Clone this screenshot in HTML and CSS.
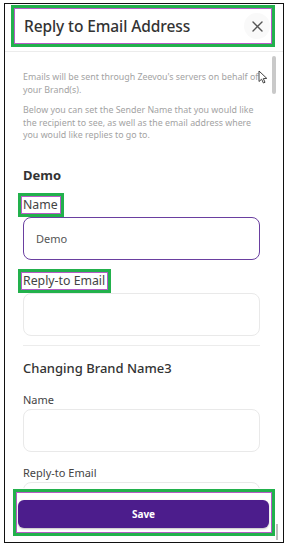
FILE: index.html
```html
<!DOCTYPE html>
<html lang="en">
<head>
    <meta charset="UTF-8">
    <meta name="viewport" content="width=device-width, initial-scale=1.0">
    <title>Reply to Email Address</title>
    <link rel="stylesheet" href="styles.css">
</head>
<body>
    <div class="frame">
        <div class="modal-header">
            <div class="mark title-box">
                <h2>Reply to Email Address</h2>
                <button type="button" class="close" aria-label="Close">
                    <svg width="11" height="11" viewBox="0 0 11 11"><path d="M1 1 L10 10 M10 1 L1 10" stroke="#555" stroke-width="1.4" stroke-linecap="round"/></svg>
                </button>
            </div>
        </div>

        <div class="modal-body">
            <p class="intro first">Emails will be sent through Zeevou's servers on behalf of your Brand(s).</p>
            <p class="intro">Below you can set the Sender Name that you would like the recipient to see, as well as the email address where you would like replies to go to.</p>

            <h3 class="brand first-brand">Demo</h3>
            <label class="mark field-label boxed">Name</label>
            <input type="text" class="field active" value="Demo">
            <label class="mark field-label boxed">Reply-to Email</label>
            <input type="text" class="field" value="">

            <hr class="divider">

            <h3 class="brand second-brand">Changing Brand Name3</h3>
            <label class="field-label">Name</label>
            <input type="text" class="field" value="">
            <label class="field-label">Reply-to Email</label>
            <input type="text" class="field" value="">

            <div class="scroll-thumb"></div>
            <svg class="cursor" width="10" height="14" viewBox="0 0 10 14"><path d="M1 1 L1 11.5 L3.6 9.2 L5.4 13 L7 12.3 L5.3 8.6 L8.8 8.4 Z" fill="#fff" stroke="#444" stroke-width="1" stroke-linejoin="round"/></svg>
        </div>

        <div class="modal-footer">
            <div class="mark save-box">
                <button type="button" class="save">Save</button>
            </div>
            <div class="scroll-thumb bottom"></div>
        </div>
    </div>
</body>
</html>
```

FILE: styles.css
```css
body {
    margin: 0;
    padding: 0;
    background: #fff;
    font-family: 'Noto Sans', 'Lato', sans-serif;
    color: #333;
}

.frame {
    position: relative;
    width: 278px;
    height: 538px;
    margin: 3px 0 0 4px;
    border: 1px solid #111;
    display: flex;
    flex-direction: column;
    overflow: hidden;
    background: #fff;
}

/* green/pink highlight boxes from the annotated screenshot */
.mark {
    border: 3px solid #22b14c;
    box-shadow: inset 0 0 0 1px #b65cc6;
}

.modal-header {
    height: 47px;
    border-bottom: 1px solid #ececec;
    flex-shrink: 0;
}

.title-box {
    box-sizing: border-box;
    width: 264px;
    height: 42px;
    margin: 1px 0 0 6px;
    padding: 0 2px 0 10px;
    display: flex;
    align-items: center;
    justify-content: space-between;
}

.title-box h2 {
    margin: 0;
    font-size: 15.5px;
    font-weight: 500;
    color: #333;
    letter-spacing: -0.1px;
}

.close {
    width: 26px;
    height: 26px;
    border: none;
    border-radius: 50%;
    background: #f9f9f9;
    padding: 0;
    display: flex;
    align-items: center;
    justify-content: center;
}

.modal-body {
    position: relative;
    flex: 1;
    overflow: hidden;
    padding: 19px 0 0 18px;
}

.intro {
    margin: 0 0 8px;
    width: 240px;
    font-size: 8.85px;
    line-height: 12.6px;
    color: #a3a3a3;
}

.brand {
    margin: 0;
    font-size: 13px;
    line-height: 16px;
    color: #333;
}

.first-brand {
    margin-top: 25px;
    font-weight: 700;
    margin-bottom: 10px;
}

.second-brand {
    margin-top: 14px;
    font-weight: 500;
    margin-bottom: 17px;
}

.field-label {
    display: block;
    width: max-content;
    font-size: 11px;
    line-height: 14px;
    color: #444;
    margin-bottom: 2px;
}

.field-label.boxed {
    font-size: 12.3px;
    padding: 2px 3px 2px 2px;
    margin-left: -5px;
    margin-bottom: 0;
}

.field {
    display: block;
    box-sizing: border-box;
    width: 237px;
    height: 43px;
    margin: 0 0 14px;
    padding: 0 12px;
    border: 1px solid #e9e9e9;
    border-radius: 8px;
    font-family: inherit;
    font-size: 11px;
    color: #555;
    background: #fff;
}

.field.active {
    border-color: #6a3fa0;
}

.boxed + .field {
    margin-bottom: 9px;
}

.divider {
    width: 237px;
    margin: 6px 0 0;
    border: none;
    border-top: 1px solid #ececec;
}

.scroll-thumb {
    position: absolute;
    top: 4px;
    right: 7px;
    width: 4px;
    height: 38px;
    border-radius: 2px;
    background: #c9c9c9;
}

.scroll-thumb.bottom {
    top: 36px;
    right: 5px;
    width: 2px;
    height: 16px;
    border-radius: 0;
    background: #bdbdbd;
}

.cursor {
    position: absolute;
    top: 18px;
    left: 253px;
}

.modal-footer {
    position: relative;
    height: 54px;
    flex-shrink: 0;
    background: #fff;
}

.save-box {
    box-sizing: border-box;
    width: 262px;
    height: 47px;
    margin: 1px 0 0 8px;
    padding: 8px 3px 5px 2px;
}

.save {
    display: block;
    width: 100%;
    height: 28px;
    border: none;
    border-radius: 6px;
    background: #4c1d8c;
    color: #fff;
    font-family: inherit;
    font-size: 10px;
    font-weight: 700;
    box-shadow: 0 1px 2px rgba(0, 0, 0, 0.25);
}
```
